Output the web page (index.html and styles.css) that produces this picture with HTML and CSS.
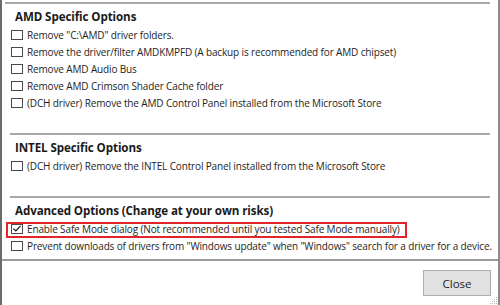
FILE: index.html
```html
<!DOCTYPE html>
<html>
<head>
<meta charset="utf-8">
<link rel="stylesheet" href="styles.css">
</head>
<body>
<div class="window">
  <div class="scroll">
    <div class="frame">
      <section class="group">
        <h2 class="title">AMD Specific Options</h2>
        <div class="opt"><span class="box"></span><span class="label">Remove "C:\AMD" driver folders.</span></div>
        <div class="opt"><span class="box"></span><span class="label">Remove the driver/filter AMDKMPFD (A backup is recommended for AMD chipset)</span></div>
        <div class="opt"><span class="box"></span><span class="label">Remove AMD Audio Bus</span></div>
        <div class="opt"><span class="box"></span><span class="label">Remove AMD Crimson Shader Cache folder</span></div>
        <div class="opt"><span class="box"></span><span class="label">(DCH driver) Remove the AMD Control Panel installed from the Microsoft Store</span></div>
      </section>
      <hr class="sep">
      <section class="group">
        <h2 class="title">INTEL Specific Options</h2>
        <div class="opt"><span class="box"></span><span class="label">(DCH driver) Remove the INTEL Control Panel installed from the Microsoft Store</span></div>
      </section>
      <hr class="sep">
      <section class="group">
        <h2 class="title">Advanced Options (Change at your own risks)</h2>
        <div class="opt highlight"><span class="box checked"><svg viewBox="0 0 12 10" width="10" height="8"><path d="M1.5 4.5 L4.5 7.5 L10.5 1" fill="none" stroke="#111" stroke-width="1.4"/></svg></span><span class="label">Enable Safe Mode dialog (Not recommended until you tested Safe Mode manually)</span></div>
        <div class="opt"><span class="box"></span><span class="label">Prevent downloads of drivers from "Windows update" when "Windows" search for a driver for a device.</span></div>
      </section>
    </div>
  </div>
  <div class="footer">
    <button class="btn">Close</button>
    <svg class="grip" width="9" height="9" viewBox="0 0 9 9"><g fill="#b5b5b5"><rect x="7" y="1" width="1" height="1"/><rect x="5" y="3" width="1" height="1"/><rect x="7" y="3" width="1" height="1"/><rect x="3" y="5" width="1" height="1"/><rect x="5" y="5" width="1" height="1"/><rect x="7" y="5" width="1" height="1"/><rect x="1" y="7" width="1" height="1"/><rect x="3" y="7" width="1" height="1"/><rect x="5" y="7" width="1" height="1"/><rect x="7" y="7" width="1" height="1"/></g></svg>
  </div>
</div>
</body>
</html>
```
FILE: styles.css
```css
html, body {
  margin: 0;
  padding: 0;
  width: 500px;
  height: 305px;
  overflow: hidden;
  background: #fff;
}
body {
  font-family: "Open Sans", "Noto Sans", sans-serif;
  color: #1e1e1e;
}
.window {
  box-sizing: border-box;
  height: 305px;
  border-left: 2px solid #6a6a6a;
  border-right: 2px solid #8c8c8c;
  display: flex;
  flex-direction: column;
  position: relative;
}
.scroll {
  box-sizing: border-box;
  height: 259px;
  padding: 2px 8px 0 3px;
}
.frame {
  border-top: 2px solid #a8a8a8;
}
.title {
  margin: 4px 0 0 0;
  padding-left: 10px;
  height: 18px;
  line-height: 18px;
  font-size: 11.6px;
  letter-spacing: -0.1px;
  font-weight: 700;
  color: #1a1a1a;
}
.opt {
  display: flex;
  align-items: center;
  height: 17px;
  padding-left: 6px;
  gap: 4px;
  font-size: 10px;
  letter-spacing: -0.14px;
  white-space: nowrap;
  position: relative;
}
.box {
  box-sizing: border-box;
  width: 12px;
  height: 10px;
  border: 1px solid #4a4a4a;
  background: #fff;
  display: flex;
  align-items: center;
  justify-content: center;
  flex: none;
}
.highlight::after {
  content: "";
  position: absolute;
  left: 1px;
  top: 2px;
  width: 401px;
  height: 16px;
  box-sizing: border-box;
  border: 2px solid #e0262b;
}
.sep {
  border: 0;
  height: 2px;
  background: #a8a8a8;
  margin: 22px 0 0 5px;
}
.footer {
  flex: 1;
  border-top: 2px solid #9a9a9a;
  display: flex;
  justify-content: flex-end;
  align-items: flex-start;
  padding: 9px 7px 0 0;
  position: relative;
}
.btn {
  width: 68px;
  height: 26px;
  background: #e1e1e1;
  border: 1px solid #adadad;
  font-family: "Open Sans", "Noto Sans", sans-serif;
  font-size: 11.5px;
  color: #1e1e1e;
  padding: 0;
}
.grip {
  position: absolute;
  right: 0;
  bottom: 0;
}
```
